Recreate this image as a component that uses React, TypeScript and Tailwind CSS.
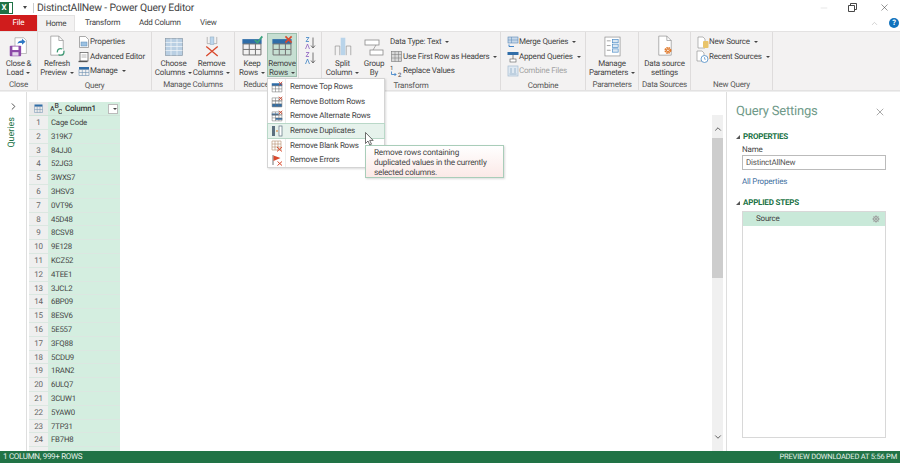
import React from "react";
import { ChevronRight, ChevronUp, ChevronDown, X, Minus } from "lucide-react";

const rows = [
  "Cage Code", "319K7", "84JJ0", "52JG3", "3WXS7", "3HSV3", "0VT96", "45D48",
  "8CSV8", "9E128", "KCZ52", "4TEE1", "3JCL2", "6BP09", "8ESV6", "5E557",
  "3FQ88", "5CDU9", "1RAN2", "6ULQ7", "3CUW1", "5YAW0", "7TP31", "FB7H8", "",
];

function Caret({ className = "" }: { className?: string }) {
  return <span className={`inline-block ml-[3px] align-middle w-0 h-0 border-x-[2px] border-x-transparent border-t-[2.5px] border-t-[#444] ${className}`} />;
}

// grid with a coloured band, used for most of the table glyphs
function Grid({ size = 16, head = "#2f6da8", cross, check, band = "top" }: { size?: number; head?: string; cross?: boolean; check?: boolean; band?: "top" | "bottom" | "alt" }) {
  return (
    <svg width={size} height={size} viewBox="0 0 16 16" fill="none">
      {band === "top" && <rect x="1" y="3" width="14" height="3.5" fill={head} />}
      {band === "bottom" && <rect x="1.500" y="10.500" width="13" height="4" fill={head} />}
      {band === "alt" && <path d="M1 4.500h9v2.500H1zM6 10.500h9V13H6z" fill={head} />}
      <path d="M1.5 6.5h13v8h-13zM1.5 10.5h13M6 6.5v8M10.5 6.5v8" stroke="#6f6f6f" strokeWidth="0.7" />
      {band !== "top" && <path d="M1.500 2.500h13v4h-13zM6 2.500v4M10.500 2.500v4" stroke="#6f6f6f" strokeWidth="0.7" />}
      {cross && <path d="M10.5 1l4.5 4.5M15 1l-4.5 4.5" stroke="#d9492c" strokeWidth="1.2" />}
      {check && <path d="M10 3.5l2 2 3.5-4.5" stroke="#3aa17e" strokeWidth="1.3" />}
    </svg>
  );
}

function DocBase({ children }: { children?: React.ReactNode }) {
  return (
    <svg width="20" height="22" viewBox="0 0 26 30" fill="none">
      <path d="M4.5 1.5h11l6 6v20h-17z" fill="#fff" stroke="#8a8a8a" strokeWidth="0.9" />
      <path d="M15.5 1.5v6h6" stroke="#8a8a8a" strokeWidth="0.9" />
      {children}
    </svg>
  );
}

function BigBtn({ icon, lines, caret, w, active }: { icon: React.ReactNode; lines: [string, string]; caret?: boolean; w: number; active?: boolean }) {
  return (
    <div
      style={{ width: w }}
      className={`flex flex-col items-center shrink-0 leading-[9px] text-center ${active ? "h-[44px] -mt-[2px] bg-[#c6dfd2] border border-[#9dbfae] pt-[1px]" : "h-[42px]"}`}
    >
      <div className="h-[22px] flex items-end justify-center">{icon}</div>
      <div className="mt-[2px] whitespace-nowrap">{lines[0]}</div>
      <div className="whitespace-nowrap">{lines[1]}{caret && <Caret />}</div>
    </div>
  );
}

function SmallBtn({ icon, label, caret, muted }: { icon?: React.ReactNode; label: string; caret?: boolean; muted?: boolean }) {
  return (
    <div className={`flex items-center h-[14.5px] whitespace-nowrap ${muted ? "text-[#a2a2a2]" : ""}`}>
      {icon && <span className="w-[13px] h-[13px] flex items-center justify-center">{icon}</span>}
      <span>{label}</span>
      {caret && <Caret className="ml-[4px]" />}
    </div>
  );
}

function Group({ w, label, children, className = "" }: { w: number; label: string; children: React.ReactNode; className?: string }) {
  return (
    <div style={{ width: w }} className="shrink-0 h-full flex flex-col border-r border-[#dedcdc]">
      <div className={`flex-1 flex items-start pt-[3px] ${className}`}>{children}</div>
      <div className="h-[12px] leading-[13px] text-center text-[#555] whitespace-nowrap overflow-hidden">{label}</div>
    </div>
  );
}

function Ribbon() {
  return (
    <div className="h-[60px] flex bg-[#f3f2f2] border-y border-[#e3e2e2] text-[8px] text-[#444] shrink-0">
      <Group w={38} label="Close" className="justify-center">
        <BigBtn
          w={36}
          lines={["Close &", "Load"]}
          caret
          icon={
            <svg width="21" height="21" viewBox="0 0 24 24" fill="none">
              <path d="M8 2h10l3 3v15H8z" fill="#fff" stroke="#999" strokeWidth="0.7" />
              <path d="M11 9c0-3 3-4 5-4V3l4 3.5-4 3.500V8c-2 0-4 0-5 1z" fill="#2f78c4" />
              <rect x="2" y="11" width="13" height="12" rx="1" fill="#8d4aa8" />
              <rect x="5" y="12" width="7" height="4" fill="#fff" />
              <rect x="5" y="18.5" width="7" height="4" fill="#e3d6ea" />
            </svg>
          }
        />
      </Group>
      <Group w={114} label="Query">
        <BigBtn
          w={38}
          lines={["Refresh", "Preview"]}
          caret
          icon={
            <DocBase>
              <circle cx="18" cy="23" r="4.5" stroke="#3d9a74" strokeWidth="1.8" strokeDasharray="10 3" fill="#fff" />
            </DocBase>
          }
        />
        <div className="ml-[1px] flex flex-col">
          <SmallBtn
            label="Properties"
            icon={
              <svg width="12" height="12" viewBox="0 0 12 12" fill="none">
                <path d="M1.5.5h6l3 3v8h-9z" fill="#fff" stroke="#888" strokeWidth="0.7" />
                <rect x="3" y="6" width="6" height="4" fill="#9cc2e3" stroke="#5a88b5" strokeWidth="0.5" />
              </svg>
            }
          />
          <SmallBtn
            label="Advanced Editor"
            icon={
              <svg width="12" height="12" viewBox="0 0 12 12" fill="none">
                <rect x="2" y="1.5" width="8" height="8.5" fill="#fff" stroke="#666" strokeWidth="0.8" />
                <path d="M0.5 10.5h9" stroke="#555" strokeWidth="1.3" />
                <path d="M3.5 4h5M3.5 6h5" stroke="#888" strokeWidth="0.6" />
              </svg>
            }
          />
          <SmallBtn
            label="Manage"
            caret
            icon={
              <svg width="12" height="12" viewBox="0 0 12 12" fill="none">
                <rect x="1" y="2" width="10" height="2.5" fill="#2f6da8" />
                <path d="M1 4.5h10v6H1zM1 7.5h10M4.3 4.500v6M7.7 4.500v6" stroke="#6c8fb0" strokeWidth="0.6" />
              </svg>
            }
          />
        </div>
      </Group>
      <Group w={83} label="Manage Columns" className="pl-[3px]">
        <BigBtn
          w={37}
          lines={["Choose", "Columns"]}
          caret
          icon={
            <svg width="20" height="20" viewBox="0 0 20 20" fill="none">
              <rect x="1.5" y="1.5" width="17" height="17" fill="#b9cfe3" stroke="#8a9aa8" strokeWidth="0.7" />
              <path d="M1.5 5.500h17M1.5 9.500h17M1.5 13.500h17M7 1.500v17M13 1.500v17" stroke="#f3f6f9" strokeWidth="0.7" />
            </svg>
          }
        />
        <BigBtn
          w={39}
          lines={["Remove", "Columns"]}
          caret
          icon={
            <svg width="20" height="21" viewBox="0 0 20 22" fill="none">
              <path d="M5 1v7M15 1v7M5 8h10" stroke="#9a9a9a" strokeWidth="0.7" />
              <rect x="8" y="1" width="4" height="8" fill="#bcd6ec" stroke="#8aa5bb" strokeWidth="0.5" />
              <path d="M4 11l12 10M16 11L4 21" stroke="#d9492c" strokeWidth="1.4" />
            </svg>
          }
        />
      </Group>
      <Group w={64} label="Reduce Rows" className="pl-[2px]">
        <BigBtn w={30} lines={["Keep", "Rows"]} caret icon={<Grid size={22} check />} />
        <BigBtn w={30} lines={["Remove", "Rows"]} caret active icon={<Grid size={22} cross />} />
      </Group>
      <Group w={23} label="" className="justify-center">
        <div className="flex flex-col gap-[1px] pt-[1px]">
          {[0, 1].map((i) => (
            <svg key={i} width="13" height="14" viewBox="0 0 13 14" fill="none">
              <path d="M2 1.500h3L2 5.500h3" stroke={i ? "#8d5fbf" : "#3d83c4"} strokeWidth="0.8" />
              <path d="M1.500 13l2-5 2 5" stroke={i ? "#3d83c4" : "#8d5fbf"} strokeWidth="0.8" />
              <path d="M9 1.500v10M7 9.500l2 2.500 2-2.500" stroke="#555" strokeWidth="0.8" />
            </svg>
          ))}
        </div>
      </Group>
      <Group w={179} label="Transform" className="pl-[1px]">
        <BigBtn
          w={39}
          lines={["Split", "Column"]}
          caret
          icon={
            <svg width="20" height="22" viewBox="0 0 20 24" fill="none">
              <path d="M1.500 22v-10h5v10M13.500 22v-10h5v10" stroke="#8a8a8a" strokeWidth="0.7" />
              <rect x="7.500" y="3" width="5" height="19" fill="#b9d4ea" />
            </svg>
          }
        />
        <BigBtn
          w={24}
          lines={["Group", "By"]}
          icon={
            <svg width="20" height="18" viewBox="0 0 20 18" fill="none">
              <rect x="1" y="1" width="14" height="5" fill="#fff" stroke="#8a8a8a" strokeWidth="0.8" />
              <rect x="6" y="11" width="13" height="5" fill="#fff" stroke="#8a8a8a" strokeWidth="0.8" />
              <path d="M12 6l-3 5" stroke="#8a8a8a" strokeWidth="0.7" />
            </svg>
          }
        />
        <div className="ml-[4px] flex flex-col">
          <SmallBtn label="Data Type: Text" caret />
          <SmallBtn
            label="Use First Row as Headers"
            caret
            icon={
              <svg width="11" height="11" viewBox="0 0 11 11" fill="none">
                <rect x="0.500" y="0.500" width="10" height="10" fill="#d8d8d8" stroke="#777" strokeWidth="0.6" />
                <path d="M0.500 3.500h10M0.500 7h10M4 .5v10M7.500.5v10" stroke="#777" strokeWidth="0.5" />
              </svg>
            }
          />
          <SmallBtn
            label="Replace Values"
            icon={
              <svg width="13" height="13" viewBox="0 0 13 13" fill="none">
                <text x="0" y="5" fontSize="6" fill="#444" fontFamily="Roboto">1</text>
                <text x="8" y="12" fontSize="6" fill="#444" fontFamily="Roboto">2</text>
                <path d="M1.500 6.500v3h4.500M4.500 8l1.500 1.500L4.500 11" stroke="#2f78c4" strokeWidth="0.8" />
              </svg>
            }
          />
        </div>
      </Group>
      <Group w={85} label="Combine" className="pl-[5px]">
        <div className="flex flex-col">
          <SmallBtn
            label="Merge Queries"
            caret
            icon={
              <svg width="12" height="12" viewBox="0 0 12 12" fill="none">
                <rect x="1" y="1" width="10" height="6" fill="#c6d8ea" stroke="#5a88b5" strokeWidth="0.6" />
                <path d="M1 4h10M4.500 1v6" stroke="#5a88b5" strokeWidth="0.5" />
                <path d="M2 8.500v2h5" stroke="#2f78c4" strokeWidth="0.9" />
              </svg>
            }
          />
          <SmallBtn
            label="Append Queries"
            caret
            icon={
              <svg width="12" height="12" viewBox="0 0 12 12" fill="none">
                <rect x="0.500" y="1" width="11" height="3" fill="#2f6da8" />
                <rect x="3" y="8" width="6" height="3" fill="#fff" stroke="#5a5a5a" strokeWidth="0.6" />
                <path d="M6 4v4" stroke="#5a5a5a" strokeWidth="0.7" />
              </svg>
            }
          />
          <SmallBtn
            label="Combine Files"
            muted
            icon={
              <svg width="12" height="12" viewBox="0 0 12 12" fill="none">
                <rect x="1" y="1" width="10" height="10" fill="#dfe9f2" stroke="#a5bcd0" strokeWidth="0.7" />
                <path d="M4 3v5M8 3v5M2.500 9h7" stroke="#8aa8c4" strokeWidth="0.8" />
              </svg>
            }
          />
        </div>
      </Group>
      <Group w={53} label="Parameters" className="justify-center">
        <BigBtn
          w={50}
          lines={["Manage", "Parameters"]}
          caret
          icon={
            <svg width="17" height="21" viewBox="0 0 18 22" fill="none">
              <rect x="1" y="1" width="16" height="20" fill="#fff" stroke="#888" strokeWidth="0.7" />
              <path d="M3 5h4M3 10h4M3 15h4" stroke="#888" strokeWidth="0.8" />
              <rect x="9" y="3.500" width="6" height="3.500" fill="#dbe8f3" stroke="#4a8ac4" strokeWidth="0.7" />
              <rect x="9" y="8.500" width="6" height="3.500" fill="#dbe8f3" stroke="#4a8ac4" strokeWidth="0.7" />
              <rect x="9" y="13.500" width="6" height="3.500" fill="#dbe8f3" stroke="#4a8ac4" strokeWidth="0.7" />
            </svg>
          }
        />
      </Group>
      <Group w={52} label="Data Sources" className="justify-center">
        <BigBtn
          w={50}
          lines={["Data source", "settings"]}
          icon={
            <DocBase>
              <circle cx="17" cy="21" r="3.500" stroke="#e0792b" strokeWidth="2.500" strokeDasharray="2 0.8" fill="none" />
              <circle cx="17" cy="21" r="2.500" fill="#e0792b" />
              <circle cx="17" cy="21" r="1.100" fill="#fff" />
            </DocBase>
          }
        />
      </Group>
      <Group w={82} label="New Query" className="pl-[5px]">
        <div className="flex flex-col">
          <SmallBtn
            label="New Source"
            caret
            icon={
              <svg width="12" height="13" viewBox="0 0 12 13" fill="none">
                <path d="M1 1h5l2 2v9H1z" fill="#fff" stroke="#888" strokeWidth="0.6" />
                <rect x="6" y="5" width="5.500" height="7" rx="1" fill="#e9c46a" />
              </svg>
            }
          />
          <SmallBtn
            label="Recent Sources"
            caret
            icon={
              <svg width="13" height="13" viewBox="0 0 13 13" fill="none">
                <path d="M1 1h5l2 2v8H1z" fill="#fff" stroke="#888" strokeWidth="0.6" />
                <circle cx="8.500" cy="9" r="3.500" fill="#fff" stroke="#4a8ac4" strokeWidth="0.8" />
                <path d="M8.500 7v2.200h1.500" stroke="#4a8ac4" strokeWidth="0.6" />
              </svg>
            }
          />
        </div>
      </Group>
    </div>
  );
}

function TopBars() {
  return (
    <>
      <div className="h-[15px] flex items-center text-[10.400px] text-[#444] shrink-0 relative">
        <span className="w-[8px] h-[12px] bg-[#1e7145] text-white text-[8px] leading-[12px] text-center font-bold">X</span>
        <span className="w-[5px] h-[12px] border border-[#1e7145] bg-white" />
        <span className="ml-[10px] w-0 h-0 border-x-[2.500px] border-x-transparent border-t-[3px] border-t-[#444]" />
        <span className="ml-[6px] h-[10px] w-px bg-[#ccc]" />
        <span className="ml-[3px] whitespace-nowrap">DistinctAllNew - Power Query Editor</span>
        <div className="ml-auto flex items-center text-[#333]">
          <Minus size={10} strokeWidth={1} className="mr-[19px] text-[#c4c4c4]" />
          <svg width="9" height="9" viewBox="0 0 9 9" fill="none" className="mr-[22px]">
            <path d="M2.500 2.500V.5h6v6H6.500M.5 2.500h6v6h-6z" stroke="#333" strokeWidth="0.9" />
          </svg>
          <X size={11} strokeWidth={1.100} className="mr-[10px]" />
        </div>
      </div>
      <div className="h-[16px] flex items-stretch text-[8px] text-[#444] shrink-0">
        <div className="w-[37px] bg-[#d01c1c] text-white flex items-center justify-center">File</div>
        <div className="w-[38px] bg-[#f3f2f2] border-x border-t border-[#e3e2e2] flex items-center justify-center">Home</div>
        <div className="ml-[10px] w-[33px] flex items-center whitespace-nowrap">Transform</div>
        <div className="ml-[21px] w-[42px] flex items-center whitespace-nowrap">Add Column</div>
        <div className="ml-[19px] flex items-center">View</div>
        <div className="ml-auto flex items-center pr-[1px]">
          <ChevronUp size={9} strokeWidth={1.500} className="mr-[10px] text-[#b0b0b0]" />
          <span className="w-[10px] h-[10px] rounded-full bg-[#1072bd] text-white text-[7.500px] leading-[10px] text-center font-bold">?</span>
        </div>
      </div>
    </>
  );
}

function DataTable() {
  return (
    <div className="w-[91px] text-[7.800px] shrink-0">
      <div className="h-[14px] flex bg-[#d4eee0] border-b border-[#cfe3d8]">
        <div className="w-[19px] bg-[#e9e9e9] flex items-center justify-center">
          <svg width="10" height="9" viewBox="0 0 10 9" fill="none">
            <rect x="0.500" y="0.500" width="8" height="2" fill="#2f6da8" />
            <path d="M0.500 2.500h8v6h-8zM0.500 5.500h8M3.200 2.500v6M6 2.500v6" stroke="#6c8fb0" strokeWidth="0.5" />
          </svg>
        </div>
        <div className="flex-1 flex items-center pl-[2px] text-[#333] font-medium text-[8px]">
          <svg width="12" height="13" viewBox="0 0 12 13" className="mr-[3px] shrink-0" fill="#444" fontFamily="Roboto" fontSize="7">
            <text x="0" y="9">A</text>
            <text x="4.500" y="6">B</text>
            <text x="8" y="12" fill="#444">C</text>
          </svg>
          Column1
        </div>
        <div className="w-[10px] h-[10px] mt-[2px] mr-[2px] bg-white border border-[#bbb] flex items-center justify-center">
          <Caret className="ml-0" />
        </div>
      </div>
      {rows.map((code, i) => (
        <div key={i} className="h-[13.800px] flex border-b border-[#dbe7e1]">
          <div className="w-[19px] bg-[#efefef] text-center text-[#666] text-[8px] leading-[13px]">{code ? i + 1 : ""}</div>
          <div className="flex-1 bg-[#d4eee0] pl-[3px] leading-[13px] text-[#444]">{code}</div>
        </div>
      ))}
    </div>
  );
}

function QuerySettings() {
  return (
    <div className="w-[174px] shrink-0 border-l border-[#dedede] text-[8px] text-[#444] pl-[9px] pr-[14px] flex flex-col">
      <div className="flex items-center justify-between h-[18px] mt-[11px] text-[13px] text-[#6f9a89] whitespace-nowrap">
        Query Settings
        <X size={12} strokeWidth={1} className="text-[#555]" />
      </div>
      <div className="mt-[10px] flex items-center h-[12px] font-bold text-[#217346]">
        <span className="w-0 h-0 border-l-[4px] border-l-transparent border-b-[4px] border-b-[#555] mr-[3px]" />
        PROPERTIES
      </div>
      <div className="ml-[6px] mt-[1px] leading-[11px]">Name</div>
      <div className="ml-[6px] h-[15px] border border-[#bbb] bg-white px-[3px] leading-[13px] text-[#555]">DistinctAllNew</div>
      <div className="ml-[6px] mt-[6px] leading-[11px] text-[#3f6f9f]">All Properties</div>
      <div className="mt-[10px] flex items-center h-[12px] font-bold text-[#217346]">
        <span className="w-0 h-0 border-l-[4px] border-l-transparent border-b-[4px] border-b-[#555] mr-[3px]" />
        APPLIED STEPS
      </div>
      <div className="ml-[6px] mt-[2px] h-[227px] border border-[#d8d8d8] bg-white">
        <div className="h-[14px] bg-[#c9e9d9] flex items-center justify-between pl-[13px] pr-[5px]">
          Source
          <svg width="8" height="8" viewBox="0 0 8 8" fill="none">
            <circle cx="4" cy="4" r="2.500" stroke="#9a9a9a" strokeWidth="1" />
            <path d="M4 0v8M0 4h8M1.200 1.200l5.600 5.600M6.800 1.200L1.200 6.800" stroke="#9a9a9a" strokeWidth="0.6" />
          </svg>
        </div>
      </div>
    </div>
  );
}

const removeItems = [
  { label: "Remove Top Rows", icon: <Grid size={12} cross /> },
  { label: "Remove Bottom Rows", icon: <Grid size={12} band="bottom" cross /> },
  { label: "Remove Alternate Rows", icon: <Grid size={12} band="alt" cross /> },
  {
    label: "Remove Duplicates",
    active: true,
    icon: (
      <svg width="12" height="12" viewBox="0 0 12 12" fill="none">
        <rect x="1" y="1" width="3" height="10" fill="#5b6f7f" />
        <rect x="8" y="1" width="3" height="10" fill="#fff" stroke="#5b6f7f" strokeWidth="0.7" />
        <path d="M5 6h2" stroke="#d9792b" strokeWidth="1" />
      </svg>
    ),
  },
  {
    label: "Remove Blank Rows",
    icon: (
      <svg width="12" height="12" viewBox="0 0 12 12" fill="none">
        <path d="M1 1h9v9H1zM1 4h9M1 7h9M4 1v9M7 1v9" stroke="#b38a6a" strokeWidth="0.6" />
        <path d="M6 7l5 4.500M11 7l-5 4.500" stroke="#d9492c" strokeWidth="1" />
      </svg>
    ),
  },
  {
    label: "Remove Errors",
    icon: (
      <svg width="12" height="12" viewBox="0 0 12 12" fill="none">
        <path d="M2 1v10" stroke="#777" strokeWidth="1" />
        <path d="M2.500 1.500l7 2.500-7 3z" fill="#d9492c" />
        <path d="M6.500 7.500l4.500 4M11 7.500l-4.500 4" stroke="#d9492c" strokeWidth="1" />
      </svg>
    ),
  },
];

function RemoveMenu() {
  return (
    <div className="absolute left-[267px] top-[78px] w-[118px] h-[90px] bg-white border border-[#d4d4d4] shadow-[1px_1px_2px_rgba(0,0,0,0.15)] text-[8px] text-[#444] pt-px">
      <div className="absolute left-[17px] top-0 bottom-0 w-px bg-[#ececec]" />
      {removeItems.map((item) => (
        <div
          key={item.label}
          className={`relative h-[14.600px] flex items-center ${item.active ? "bg-[#e6f2ec] outline outline-[#b9d8c8]" : ""}`}
        >
          <span className="w-[18px] flex justify-center shrink-0">{item.icon}</span>
          <span className="ml-[4px] whitespace-nowrap">{item.label}</span>
        </div>
      ))}
    </div>
  );
}

export default function App() {
  return (
    <div
      className="relative w-[900px] h-[463px] bg-white overflow-hidden flex flex-col [text-rendering:geometricPrecision] tracking-[-0.2px]"
      style={{ fontFamily: 'Roboto, "Noto Sans", sans-serif' }}
    >
      <TopBars />
      <Ribbon />
      <div className="flex-1 min-h-0 flex border-t border-[#eeeeee]">
        <div className="w-[27px] shrink-0 border-r border-[#dedede] flex flex-col items-center pt-[9px]">
          <ChevronRight size={11} strokeWidth={2} className="text-[#444]" />
          <div className="mt-[5px] text-[9px] tracking-normal text-[#217346] [writing-mode:vertical-rl] rotate-180">Queries</div>
        </div>
        <div className="flex-1 min-w-0 flex pl-[2px] pt-[10px] overflow-hidden">
          <DataTable />
          <div className="ml-auto mt-[13px] mr-[3px] w-[11px] bg-[#f0f0f0] flex flex-col items-center">
            <ChevronUp size={10} strokeWidth={2} className="mt-[9px] text-[#444] shrink-0" />
            <div className="mt-[4px] w-full h-[140px] bg-[#cdcdcd] shrink-0" />
            <div className="flex-1" />
            <ChevronDown size={10} strokeWidth={2} className="mb-[9px] text-[#444] shrink-0" />
          </div>
        </div>
        <QuerySettings />
      </div>
      <div className="h-[12px] bg-[#217346] text-[#e6f0ea] flex items-center justify-between px-[3px] shrink-0">
        <span className="text-[8px] tracking-[-0.3px]">1 COLUMN, 999+ ROWS</span>
        <span className="text-[7.500px]">PREVIEW DOWNLOADED AT 5:56 PM</span>
      </div>

      <RemoveMenu />
      <div className="absolute left-[365px] top-[145px] w-[139px] h-[33px] border border-[#a9cdb9] bg-gradient-to-b from-white to-[#fbe9e7] shadow-[1px_1px_2px_rgba(0,0,0,0.15)] text-[8.200px] leading-[10px] text-[#444] px-[8px] pt-[2px] whitespace-nowrap">
        Remove rows containing<br />duplicated values in the currently<br />selected columns.
      </div>
      <svg className="absolute left-[365px] top-[132px]" width="10" height="14" viewBox="0 0 10 14" fill="none">
        <path d="M.5.5v11l2.500-2.500 1.800 4 1.700-.8-1.800-3.800h3.500z" fill="#fff" stroke="#333" strokeWidth="0.7" />
      </svg>
    </div>
  );
}
